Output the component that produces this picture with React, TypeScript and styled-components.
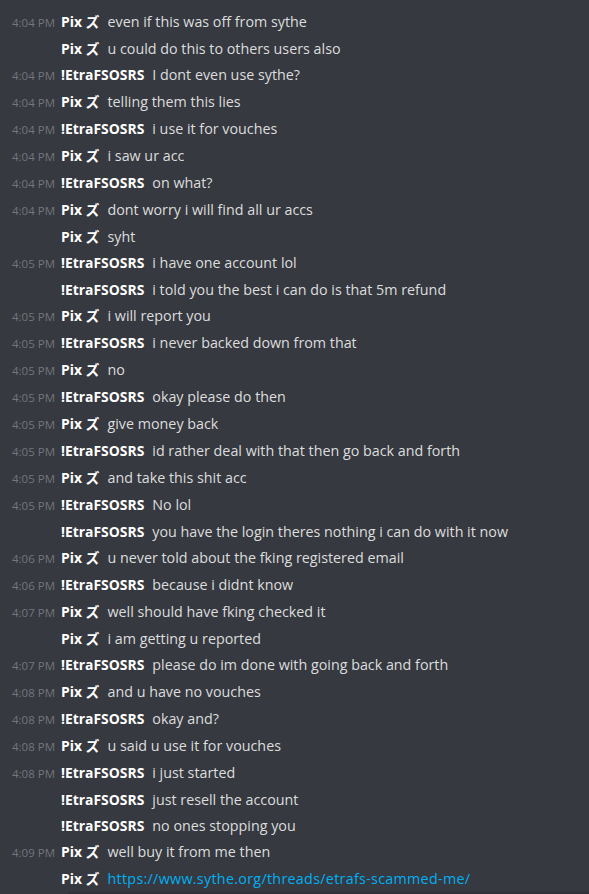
import React from "react";
import styled, { createGlobalStyle } from "styled-components";

const GlobalStyle = createGlobalStyle`
  html, body {
    margin: 0;
    padding: 0;
    background: #36393f;
    overflow: hidden;
  }
`;

type Author = "pix" | "etra";

interface Message {
  time?: string;
  author: Author;
  text: string;
  link?: boolean;
}

const names: Record<Author, string> = {
  pix: "Pix ズ",
  etra: "!EtraFSOSRS",
};

const messages: Message[] = [
  { time: "4:04 PM", author: "pix", text: "even if this was off from sythe" },
  { author: "pix", text: "u could do this to others users also" },
  { time: "4:04 PM", author: "etra", text: "I dont even use sythe?" },
  { time: "4:04 PM", author: "pix", text: "telling them this lies" },
  { time: "4:04 PM", author: "etra", text: "i use it for vouches" },
  { time: "4:04 PM", author: "pix", text: "i saw ur acc" },
  { time: "4:04 PM", author: "etra", text: "on what?" },
  { time: "4:04 PM", author: "pix", text: "dont worry i will find all ur accs" },
  { author: "pix", text: "syht" },
  { time: "4:05 PM", author: "etra", text: "i have one account lol" },
  { author: "etra", text: "i told you the best i can do is that 5m refund" },
  { time: "4:05 PM", author: "pix", text: "i will report you" },
  { time: "4:05 PM", author: "etra", text: "i never backed down from that" },
  { time: "4:05 PM", author: "pix", text: "no" },
  { time: "4:05 PM", author: "etra", text: "okay please do then" },
  { time: "4:05 PM", author: "pix", text: "give money back" },
  { time: "4:05 PM", author: "etra", text: "id rather deal with that then go back and forth" },
  { time: "4:05 PM", author: "pix", text: "and take this shit acc" },
  { time: "4:05 PM", author: "etra", text: "No lol" },
  { author: "etra", text: "you have the login theres nothing i can do with it now" },
  { time: "4:06 PM", author: "pix", text: "u never told about the fking registered email" },
  { time: "4:06 PM", author: "etra", text: "because i didnt know" },
  { time: "4:07 PM", author: "pix", text: "well should have fking checked it" },
  { author: "pix", text: "i am getting u reported" },
  { time: "4:07 PM", author: "etra", text: "please do im done with going back and forth" },
  { time: "4:08 PM", author: "pix", text: "and u have no vouches" },
  { time: "4:08 PM", author: "etra", text: "okay and?" },
  { time: "4:08 PM", author: "pix", text: "u said u use it for vouches" },
  { time: "4:08 PM", author: "etra", text: "i just started" },
  { author: "etra", text: "just resell the account" },
  { author: "etra", text: "no ones stopping you" },
  { time: "4:09 PM", author: "pix", text: "well buy it from me then" },
  { author: "pix", text: "https://www.sythe.org/threads/etrafs-scammed-me/", link: true },
];

const Chat = styled.div`
  display: flex;
  flex-direction: column;
  padding-top: 9px;
  height: 894px;
  box-sizing: border-box;
  font-family: "Open Sans", "Noto Sans CJK JP", sans-serif;
`;

const Row = styled.div<{ $start: boolean }>`
  display: flex;
  align-items: baseline;
  height: ${(p) => (p.$start ? "27px" : "26px")};
  line-height: 26px;
  white-space: nowrap;
`;

const Stamp = styled.span`
  flex: 0 0 61px;
  box-sizing: border-box;
  padding-left: 12px;
  font-size: 11.5px;
  color: #72767d;
`;

const Name = styled.span`
  font-size: 13.9px;
  font-weight: 700;
  color: #ffffff;
  margin-right: 8px;
`;

const Text = styled.span<{ $link?: boolean }>`
  font-size: 14.3px;
  color: ${(p) => (p.$link ? "#00b0f4" : "#dcddde")};
  letter-spacing: ${(p) => (p.$link ? "0.3px" : "0")};
`;

const Composer = styled.div`
  margin-top: auto;
  margin-left: 68px;
  height: 3px;
  background: #303338;
  border-radius: 8px 0 0 0;
`;

export default function App() {
  return (
    <>
      <GlobalStyle />
      <Chat>
        {messages.map((m, i) => (
          <Row key={i} $start={!!m.time || i === 0}>
            <Stamp>{m.time}</Stamp>
            <Name>{names[m.author]}</Name>
            <Text $link={m.link}>{m.text}</Text>
          </Row>
        ))}
        <Composer />
      </Chat>
    </>
  );
}
